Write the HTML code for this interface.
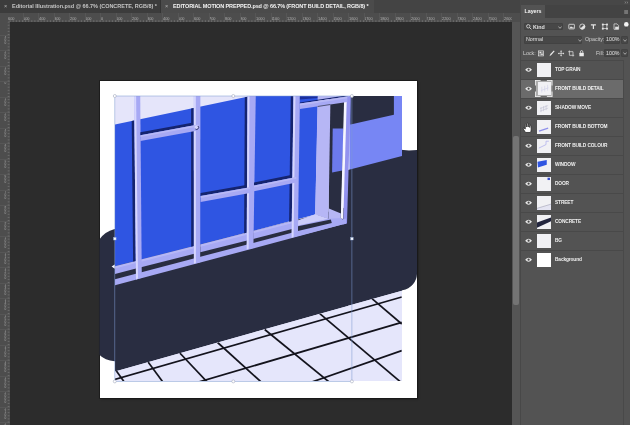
<!DOCTYPE html>
<html>
<head>
<meta charset="utf-8">
<title>Photoshop</title>
<style>
html,body{margin:0;padding:0;}
span,.tab,#ptab{will-change:transform;}
body{width:630px;height:425px;overflow:hidden;background:#2c2c2c;position:relative;font-family:"Liberation Sans",sans-serif;color:#ddd;}
.abs{position:absolute;}
#tabbar{left:0;top:0;width:512px;height:13px;background:#444;}
.tab{position:absolute;top:0;height:13px;font-size:5.5px;line-height:12.6px;white-space:nowrap;color:#c4c4c4;font-weight:bold;}
#tab1{left:0;width:161px;background:#3c3c3c;letter-spacing:-0.03px;border-right:0.5px solid #333;box-sizing:border-box;}
#tab2{left:161px;width:213px;background:#4b4b4b;color:#f4f4f4;letter-spacing:-0.115px;}
.tab .x{position:absolute;left:4.2px;top:0;font-weight:normal;font-size:5.5px;color:#b5b5b5;}
.tab .t{position:absolute;left:11.8px;top:0;}
#hruler{left:0;top:13px;width:512px;height:9px;background:#4d4d4d;overflow:hidden;}
#vruler{left:0;top:22px;width:9.5px;height:403px;background:#4d4d4d;overflow:hidden;}
.rnum{position:absolute;top:3.9px;font-size:3.9px;line-height:4px;color:#b2b2b2;}
.tk{position:absolute;top:0;width:0.5px;height:9px;background:#565656;}
.vnum{position:absolute;left:3.9px;font-size:3.2px;line-height:3px;color:#a8a8a8;text-align:center;width:3px;}
.vtk{position:absolute;left:0;width:9.5px;height:0.5px;background:#565656;}
#corner{left:0;top:13px;width:8px;height:9px;background:#4d4d4d;}
#canvas{left:9.5px;top:22px;width:502.5px;height:403px;background:#2c2c2c;}
#board{left:99.5px;top:81px;width:317.5px;height:316.5px;background:#fff;box-shadow:0 0 0 0.8px #1a1a1a, 1px 1px 2px rgba(0,0,0,.5);}
#art{left:0;top:0;width:630px;height:425px;}
#vscroll{left:512px;top:0;width:8.5px;height:425px;background:linear-gradient(to bottom,#444 0,#444 13px,#4d4d4d 13px,#4d4d4d 22px,#555 22px);}
#vthumb{left:513.2px;top:135.6px;width:5.8px;height:169.4px;background:#747474;border-radius:2px;}
#panel{left:520.2px;top:0;width:109.8px;height:425px;background:#535353;border-left:1px solid #484848;box-sizing:border-box;}
#ptop{left:521.2px;top:0;width:108.8px;height:5px;background:#474747;}
#ptabs{left:521.2px;top:5px;width:108.8px;height:12.5px;background:#434343;}
#ptab{left:521.2px;top:5px;width:24px;height:12.5px;background:#535353;font-size:5.3px;font-weight:bold;color:#f4f4f4;line-height:13.6px;text-align:center;}
.fld{position:absolute;background:#474747;border:0.5px solid #424242;box-sizing:border-box;border-radius:1px;}
.ptxt{position:absolute;font-size:5.3px;line-height:7px;color:#e2e2e2;white-space:nowrap;}
.chev{width:4px;height:3px;}
.row{position:absolute;left:521.3px;width:101.5px;height:19px;box-sizing:border-box;border-top:0.6px solid #494949;}
.row.sel{background:#6b6b6b;}
.row .eye{position:absolute;left:3.3px;top:6.9px;width:7.2px;height:5.4px;}
.row .th{position:absolute;left:15.9px;top:2.2px;width:14.2px;height:14.2px;}
.row .fr{position:absolute;left:14.1px;top:0.9px;width:17.5px;height:17px;}
.row.sel .th{left:16.3px;top:2.6px;width:13.4px;height:13.4px;}
.row .nm{position:absolute;left:34.2px;top:6.3px;font-size:4.8px;line-height:6.5px;color:#f0f0f0;white-space:nowrap;letter-spacing:-0.12px;font-weight:bold;}
</style>
</head>
<body>
<div id="tabbar" class="abs">
  <div id="tab1" class="tab"><span class="x">×</span><span class="t">Editorial Illustration.psd @ 66.7% (CONCRETE, RGB/8) *</span></div>
  <div id="tab2" class="tab"><span class="x">×</span><span class="t">EDITORIAL MOTION PREPPED.psd @ 66.7% (FRONT BUILD DETAIL, RGB/8) *</span></div>
</div>
<div id="hruler" class="abs"><span class="rnum" style="left:7.9px">600</span><i class="tk" style="left:7.0px"></i><span class="rnum" style="left:23.4px">500</span><i class="tk" style="left:22.5px"></i><span class="rnum" style="left:38.9px">400</span><i class="tk" style="left:38.0px"></i><span class="rnum" style="left:54.4px">300</span><i class="tk" style="left:53.5px"></i><span class="rnum" style="left:69.9px">200</span><i class="tk" style="left:69.0px"></i><span class="rnum" style="left:85.4px">100</span><i class="tk" style="left:84.5px"></i><span class="rnum" style="left:100.9px">0</span><i class="tk" style="left:100.0px"></i><span class="rnum" style="left:116.4px">100</span><i class="tk" style="left:115.5px"></i><span class="rnum" style="left:131.9px">200</span><i class="tk" style="left:131.0px"></i><span class="rnum" style="left:147.4px">300</span><i class="tk" style="left:146.5px"></i><span class="rnum" style="left:162.9px">400</span><i class="tk" style="left:162.0px"></i><span class="rnum" style="left:178.4px">500</span><i class="tk" style="left:177.5px"></i><span class="rnum" style="left:193.9px">600</span><i class="tk" style="left:193.0px"></i><span class="rnum" style="left:209.4px">700</span><i class="tk" style="left:208.5px"></i><span class="rnum" style="left:224.9px">800</span><i class="tk" style="left:224.0px"></i><span class="rnum" style="left:240.4px">900</span><i class="tk" style="left:239.5px"></i><span class="rnum" style="left:255.9px">1000</span><i class="tk" style="left:255.0px"></i><span class="rnum" style="left:271.4px">1100</span><i class="tk" style="left:270.5px"></i><span class="rnum" style="left:286.9px">1200</span><i class="tk" style="left:286.0px"></i><span class="rnum" style="left:302.4px">1300</span><i class="tk" style="left:301.5px"></i><span class="rnum" style="left:317.9px">1400</span><i class="tk" style="left:317.0px"></i><span class="rnum" style="left:333.4px">1500</span><i class="tk" style="left:332.5px"></i><span class="rnum" style="left:348.9px">1600</span><i class="tk" style="left:348.0px"></i><span class="rnum" style="left:364.4px">1700</span><i class="tk" style="left:363.5px"></i><span class="rnum" style="left:379.9px">1800</span><i class="tk" style="left:379.0px"></i><span class="rnum" style="left:395.4px">1900</span><i class="tk" style="left:394.5px"></i><span class="rnum" style="left:410.9px">2000</span><i class="tk" style="left:410.0px"></i><span class="rnum" style="left:426.4px">2100</span><i class="tk" style="left:425.5px"></i><span class="rnum" style="left:441.9px">2200</span><i class="tk" style="left:441.0px"></i><span class="rnum" style="left:457.4px">2300</span><i class="tk" style="left:456.5px"></i><span class="rnum" style="left:472.9px">2400</span><i class="tk" style="left:472.0px"></i><span class="rnum" style="left:488.4px">2500</span><i class="tk" style="left:487.5px"></i><span class="rnum" style="left:503.9px">2600</span><i class="tk" style="left:503.0px"></i></div>
<div id="vruler" class="abs"><span class="vnum" style="top:13.5px">3<br>0<br>0</span><i class="vtk" style="top:12.5px"></i><span class="vnum" style="top:29.0px">2<br>0<br>0</span><i class="vtk" style="top:28.0px"></i><span class="vnum" style="top:44.5px">1<br>0<br>0</span><i class="vtk" style="top:43.5px"></i><span class="vnum" style="top:60.0px">0</span><i class="vtk" style="top:59.0px"></i><span class="vnum" style="top:75.5px">1<br>0<br>0</span><i class="vtk" style="top:74.5px"></i><span class="vnum" style="top:91.0px">2<br>0<br>0</span><i class="vtk" style="top:90.0px"></i><span class="vnum" style="top:106.5px">3<br>0<br>0</span><i class="vtk" style="top:105.5px"></i><span class="vnum" style="top:122.0px">4<br>0<br>0</span><i class="vtk" style="top:121.0px"></i><span class="vnum" style="top:137.5px">5<br>0<br>0</span><i class="vtk" style="top:136.5px"></i><span class="vnum" style="top:153.0px">6<br>0<br>0</span><i class="vtk" style="top:152.0px"></i><span class="vnum" style="top:168.5px">7<br>0<br>0</span><i class="vtk" style="top:167.5px"></i><span class="vnum" style="top:184.0px">8<br>0<br>0</span><i class="vtk" style="top:183.0px"></i><span class="vnum" style="top:199.5px">9<br>0<br>0</span><i class="vtk" style="top:198.5px"></i><span class="vnum" style="top:215.0px">1<br>0<br>0<br>0</span><i class="vtk" style="top:214.0px"></i><span class="vnum" style="top:230.5px">1<br>1<br>0<br>0</span><i class="vtk" style="top:229.5px"></i><span class="vnum" style="top:246.0px">1<br>2<br>0<br>0</span><i class="vtk" style="top:245.0px"></i><span class="vnum" style="top:261.5px">1<br>3<br>0<br>0</span><i class="vtk" style="top:260.5px"></i><span class="vnum" style="top:277.0px">1<br>4<br>0<br>0</span><i class="vtk" style="top:276.0px"></i><span class="vnum" style="top:292.5px">1<br>5<br>0<br>0</span><i class="vtk" style="top:291.5px"></i><span class="vnum" style="top:308.0px">1<br>6<br>0<br>0</span><i class="vtk" style="top:307.0px"></i><span class="vnum" style="top:323.5px">1<br>7<br>0<br>0</span><i class="vtk" style="top:322.5px"></i><span class="vnum" style="top:339.0px">1<br>8<br>0<br>0</span><i class="vtk" style="top:338.0px"></i><span class="vnum" style="top:354.5px">1<br>9<br>0<br>0</span><i class="vtk" style="top:353.5px"></i><span class="vnum" style="top:370.0px">2<br>0<br>0<br>0</span><i class="vtk" style="top:369.0px"></i><span class="vnum" style="top:385.5px">2<br>1<br>0<br>0</span><i class="vtk" style="top:384.5px"></i><span class="vnum" style="top:401.0px">2<br>2<br>0<br>0</span><i class="vtk" style="top:400.0px"></i></div>
<svg class="abs" style="left:0;top:0;width:512px;height:425px" viewBox="0 0 512 425"><path d="M10.10 20.2V22M13.20 20.2V22M16.30 20.2V22M19.40 20.2V22M22.50 20.2V22M25.60 20.2V22M28.70 20.2V22M31.80 20.2V22M34.90 20.2V22M38.00 20.2V22M41.10 20.2V22M44.20 20.2V22M47.30 20.2V22M50.40 20.2V22M53.50 20.2V22M56.60 20.2V22M59.70 20.2V22M62.80 20.2V22M65.90 20.2V22M69.00 20.2V22M72.10 20.2V22M75.20 20.2V22M78.30 20.2V22M81.40 20.2V22M84.50 20.2V22M87.60 20.2V22M90.70 20.2V22M93.80 20.2V22M96.90 20.2V22M100.00 20.2V22M103.10 20.2V22M106.20 20.2V22M109.30 20.2V22M112.40 20.2V22M115.50 20.2V22M118.60 20.2V22M121.70 20.2V22M124.80 20.2V22M127.90 20.2V22M131.00 20.2V22M134.10 20.2V22M137.20 20.2V22M140.30 20.2V22M143.40 20.2V22M146.50 20.2V22M149.60 20.2V22M152.70 20.2V22M155.80 20.2V22M158.90 20.2V22M162.00 20.2V22M165.10 20.2V22M168.20 20.2V22M171.30 20.2V22M174.40 20.2V22M177.50 20.2V22M180.60 20.2V22M183.70 20.2V22M186.80 20.2V22M189.90 20.2V22M193.00 20.2V22M196.10 20.2V22M199.20 20.2V22M202.30 20.2V22M205.40 20.2V22M208.50 20.2V22M211.60 20.2V22M214.70 20.2V22M217.80 20.2V22M220.90 20.2V22M224.00 20.2V22M227.10 20.2V22M230.20 20.2V22M233.30 20.2V22M236.40 20.2V22M239.50 20.2V22M242.60 20.2V22M245.70 20.2V22M248.80 20.2V22M251.90 20.2V22M255.00 20.2V22M258.10 20.2V22M261.20 20.2V22M264.30 20.2V22M267.40 20.2V22M270.50 20.2V22M273.60 20.2V22M276.70 20.2V22M279.80 20.2V22M282.90 20.2V22M286.00 20.2V22M289.10 20.2V22M292.20 20.2V22M295.30 20.2V22M298.40 20.2V22M301.50 20.2V22M304.60 20.2V22M307.70 20.2V22M310.80 20.2V22M313.90 20.2V22M317.00 20.2V22M320.10 20.2V22M323.20 20.2V22M326.30 20.2V22M329.40 20.2V22M332.50 20.2V22M335.60 20.2V22M338.70 20.2V22M341.80 20.2V22M344.90 20.2V22M348.00 20.2V22M351.10 20.2V22M354.20 20.2V22M357.30 20.2V22M360.40 20.2V22M363.50 20.2V22M366.60 20.2V22M369.70 20.2V22M372.80 20.2V22M375.90 20.2V22M379.00 20.2V22M382.10 20.2V22M385.20 20.2V22M388.30 20.2V22M391.40 20.2V22M394.50 20.2V22M397.60 20.2V22M400.70 20.2V22M403.80 20.2V22M406.90 20.2V22M410.00 20.2V22M413.10 20.2V22M416.20 20.2V22M419.30 20.2V22M422.40 20.2V22M425.50 20.2V22M428.60 20.2V22M431.70 20.2V22M434.80 20.2V22M437.90 20.2V22M441.00 20.2V22M444.10 20.2V22M447.20 20.2V22M450.30 20.2V22M453.40 20.2V22M456.50 20.2V22M459.60 20.2V22M462.70 20.2V22M465.80 20.2V22M468.90 20.2V22M472.00 20.2V22M475.10 20.2V22M478.20 20.2V22M481.30 20.2V22M484.40 20.2V22M487.50 20.2V22M490.60 20.2V22M493.70 20.2V22M496.80 20.2V22M499.90 20.2V22M503.00 20.2V22M506.10 20.2V22M509.20 20.2V22M7.7 22.10H9.5M7.7 25.20H9.5M7.7 28.30H9.5M7.7 31.40H9.5M7.7 34.50H9.5M7.7 37.60H9.5M7.7 40.70H9.5M7.7 43.80H9.5M7.7 46.90H9.5M7.7 50.00H9.5M7.7 53.10H9.5M7.7 56.20H9.5M7.7 59.30H9.5M7.7 62.40H9.5M7.7 65.50H9.5M7.7 68.60H9.5M7.7 71.70H9.5M7.7 74.80H9.5M7.7 77.90H9.5M7.7 81.00H9.5M7.7 84.10H9.5M7.7 87.20H9.5M7.7 90.30H9.5M7.7 93.40H9.5M7.7 96.50H9.5M7.7 99.60H9.5M7.7 102.70H9.5M7.7 105.80H9.5M7.7 108.90H9.5M7.7 112.00H9.5M7.7 115.10H9.5M7.7 118.20H9.5M7.7 121.30H9.5M7.7 124.40H9.5M7.7 127.50H9.5M7.7 130.60H9.5M7.7 133.70H9.5M7.7 136.80H9.5M7.7 139.90H9.5M7.7 143.00H9.5M7.7 146.10H9.5M7.7 149.20H9.5M7.7 152.30H9.5M7.7 155.40H9.5M7.7 158.50H9.5M7.7 161.60H9.5M7.7 164.70H9.5M7.7 167.80H9.5M7.7 170.90H9.5M7.7 174.00H9.5M7.7 177.10H9.5M7.7 180.20H9.5M7.7 183.30H9.5M7.7 186.40H9.5M7.7 189.50H9.5M7.7 192.60H9.5M7.7 195.70H9.5M7.7 198.80H9.5M7.7 201.90H9.5M7.7 205.00H9.5M7.7 208.10H9.5M7.7 211.20H9.5M7.7 214.30H9.5M7.7 217.40H9.5M7.7 220.50H9.5M7.7 223.60H9.5M7.7 226.70H9.5M7.7 229.80H9.5M7.7 232.90H9.5M7.7 236.00H9.5M7.7 239.10H9.5M7.7 242.20H9.5M7.7 245.30H9.5M7.7 248.40H9.5M7.7 251.50H9.5M7.7 254.60H9.5M7.7 257.70H9.5M7.7 260.80H9.5M7.7 263.90H9.5M7.7 267.00H9.5M7.7 270.10H9.5M7.7 273.20H9.5M7.7 276.30H9.5M7.7 279.40H9.5M7.7 282.50H9.5M7.7 285.60H9.5M7.7 288.70H9.5M7.7 291.80H9.5M7.7 294.90H9.5M7.7 298.00H9.5M7.7 301.10H9.5M7.7 304.20H9.5M7.7 307.30H9.5M7.7 310.40H9.5M7.7 313.50H9.5M7.7 316.60H9.5M7.7 319.70H9.5M7.7 322.80H9.5M7.7 325.90H9.5M7.7 329.00H9.5M7.7 332.10H9.5M7.7 335.20H9.5M7.7 338.30H9.5M7.7 341.40H9.5M7.7 344.50H9.5M7.7 347.60H9.5M7.7 350.70H9.5M7.7 353.80H9.5M7.7 356.90H9.5M7.7 360.00H9.5M7.7 363.10H9.5M7.7 366.20H9.5M7.7 369.30H9.5M7.7 372.40H9.5M7.7 375.50H9.5M7.7 378.60H9.5M7.7 381.70H9.5M7.7 384.80H9.5M7.7 387.90H9.5M7.7 391.00H9.5M7.7 394.10H9.5M7.7 397.20H9.5M7.7 400.30H9.5M7.7 403.40H9.5M7.7 406.50H9.5M7.7 409.60H9.5M7.7 412.70H9.5M7.7 415.80H9.5M7.7 418.90H9.5M7.7 422.00H9.5" stroke="#828282" stroke-width="0.6" fill="none"/></svg>
<div id="corner" class="abs"></div>
<div id="canvas" class="abs"></div>
<div id="board" class="abs"></div>
<svg id="art" class="abs" viewBox="0 0 630 425">
<defs><clipPath id="floorclip"><polygon points="114.8,371.6 401.8,290.7 401.8,381.2 114.8,381.2"/></clipPath>
<clipPath id="artclip"><rect x="115" y="96" width="287" height="285"/></clipPath>
<clipPath id="imgclip"><rect x="99.5" y="81" width="317.5" height="316.5"/></clipPath></defs>
<g clip-path="url(#imgclip)">
<path d="M116 229 L114.7 229 Q104.5 231.5 99 240 L99 354.6 Q105 360.6 114.7 361.2 L116 361.2 Z" fill="#292d41"/>
<path d="M401 149.7 L409 150.6 L418 149.8 L418 272.8 L417 272.8 A17 17 0 0 1 402.4 290.2 L401 290.5 Z" fill="#292d41"/>
<g clip-path="url(#artclip)">
<polygon points="111.8,93.2 404.8,93.2 404.8,384.2 111.8,384.2" fill="#e5e5fa"/>
<polygon points="111.8,125.2 264.2,93.2 318.0,93.2 315.2,214.6 111.8,268.1" fill="#2f55e2"/>
<polygon points="111.8,267.1 348.0,206.8 348.0,305.9 111.8,372.4" fill="#292d41"/>
<polygon points="349.5,93.2 404.8,93.2 404.8,165.0 349.5,175.0" fill="#7786f4"/>
<polygon points="350.5,93.2 393.9,93.2 393.9,114.8 350.5,124.4" fill="#292d41"/>
<polygon points="347.0,170.2 404.8,155.3 404.8,289.9 347.0,306.1" fill="#292d41"/>
<polygon points="111.8,372.4 404.8,289.9 404.8,384.2 111.8,384.2" fill="#e5e6fb"/>
<polygon points="329.0,99.0 345.0,97.0 341.0,216.0 328.6,212.0" fill="#292d41"/>
<polygon points="332.7,128.5 343.6,128.5 342.3,170.6 332.1,172.4" fill="#6c7aec"/>
<polygon points="317.5,104.0 330.4,102.0 328.5,219.0 315.2,214.5" fill="#b6b6f5"/>
<polygon points="328.9,208.4 340.9,213.6 340.7,219.0 328.6,219.5" fill="#b6b6f5"/>
<polygon points="344.2,96.2 346.9,96.2 343.2,219.0 340.8,218.4" fill="#f6f6ff"/>
<polygon points="346.9,96.2 350.7,96.2 347.0,223.4 343.2,224.5" fill="#9393ef"/>
<polygon points="111.8,280.0 346.0,218.5 346.0,223.6 111.8,286.2" fill="#a7a9f4"/>
<polygon points="111.8,267.1 136.0,260.9 136.0,268.5 111.8,274.7" fill="#a7a9f4"/>
<polygon points="111.8,267.1 136.0,260.9 136.0,263.1 111.8,269.3" fill="#c3c3f7" opacity="0.55"/>
<polygon points="141.0,259.6 194.2,246.0 194.2,253.8 141.0,267.3" fill="#a7a9f4"/>
<polygon points="141.0,259.6 194.2,246.0 194.2,248.2 141.0,261.8" fill="#c3c3f7" opacity="0.55"/>
<polygon points="200.3,244.5 247.2,232.5 247.2,240.4 200.3,252.3" fill="#a7a9f4"/>
<polygon points="200.3,244.5 247.2,232.5 247.2,234.7 200.3,246.7" fill="#c3c3f7" opacity="0.55"/>
<polygon points="253.3,231.0 292.0,221.1 292.0,229.1 253.3,238.9" fill="#a7a9f4"/>
<polygon points="253.3,231.0 292.0,221.1 292.0,223.3 253.3,233.2" fill="#c3c3f7" opacity="0.55"/>
<polygon points="297.9,220.4 315.2,214.4 328.6,218.8 341.0,218.0 346.0,223.6 297.9,236.0" fill="#a7a9f4"/>
<polygon points="297.9,220.4 315.2,214.2 328.4,218.7 297.9,225.6" fill="#cdcdfa"/>
<polygon points="297.9,226.2 330.8,219.6 331.8,223.0 297.9,231.0" fill="#292d41"/>
<polygon points="131.7,121.1 134.4,120.5 135.8,260.9 133.1,261.5" fill="#15246f"/>
<polygon points="134.1,93.2 140.2,93.2 141.8,277.8 136.0,279.4" fill="#a7a9f4"/>
<polygon points="134.1,93.2 136.1,93.2 138.0,278.6 136.0,279.4" fill="#dedeff" opacity="0.85"/>
<polygon points="191.1,108.6 193.8,108.0 193.9,246.1 191.2,246.7" fill="#15246f"/>
<polygon points="193.8,93.2 200.4,93.2 200.2,262.2 193.9,263.8" fill="#a7a9f4"/>
<polygon points="193.8,93.2 195.8,93.2 195.9,263.0 193.9,263.8" fill="#dedeff" opacity="0.85"/>
<polygon points="244.8,97.3 247.5,96.7 246.8,232.7 244.1,233.3" fill="#15246f"/>
<polygon points="247.5,93.2 255.8,93.2 253.4,248.0 246.7,249.6" fill="#a7a9f4"/>
<polygon points="247.5,93.2 249.5,93.2 248.7,248.8 246.7,249.6" fill="#dedeff" opacity="0.85"/>
<polygon points="290.8,93.8 293.5,93.2 291.8,221.2 289.1,221.8" fill="#15246f"/>
<polygon points="293.5,93.2 300.0,93.2 297.9,236.1 291.6,237.7" fill="#a7a9f4"/>
<polygon points="293.5,93.2 295.5,93.2 293.6,236.9 291.6,237.7" fill="#dedeff" opacity="0.85"/>
<polygon points="140.4,132.2 192.0,122.7 192.0,125.7 140.4,135.2" fill="#15246f"/>
<polygon points="140.4,135.2 198.1,124.6 198.1,130.5 140.4,141.1" fill="#a7a9f4"/>
<polygon points="140.4,135.2 198.1,124.6 198.1,126.4 140.4,137.0" fill="#c3c3f7" opacity="0.6"/>
<polygon points="200.6,193.1 246.0,185.0 246.0,188.0 200.6,196.1" fill="#15246f"/>
<polygon points="200.6,196.1 250.0,187.3 250.0,192.9 200.6,202.0" fill="#a7a9f4"/>
<polygon points="200.6,196.1 250.0,187.3 250.0,189.1 200.6,197.9" fill="#c3c3f7" opacity="0.6"/>
<polygon points="254.0,182.6 291.0,175.0 291.0,178.0 254.0,185.6" fill="#15246f"/>
<polygon points="254.0,185.6 296.3,176.9 296.3,182.5 254.0,191.2" fill="#a7a9f4"/>
<polygon points="254.0,185.6 296.3,176.9 296.3,178.7 254.0,187.4" fill="#c3c3f7" opacity="0.6"/>
<polygon points="299.9,96.2 318.0,96.2 318.0,100.0 299.9,103.6" fill="#2f55e2"/>
<polygon points="299.9,96.2 318.0,96.2 318.0,98.0 299.9,99.6" fill="#1b2f9c"/>
<polygon points="317.6,96.2 347.0,96.2 347.0,96.5 317.6,100.0" fill="#b6b6f5"/>
<polygon points="299.9,102.4 347.3,95.2 347.3,96.4 299.9,103.6" fill="#15246f"/>
<polygon points="299.9,103.6 347.3,96.4 347.3,102.0 299.9,109.0" fill="#a7a9f4"/>
<polygon points="299.9,103.6 347.3,96.4 347.3,98.2 299.9,105.4" fill="#c3c3f7" opacity="0.6"/>
<polygon points="317.6,105.9 330.4,104.0 330.4,105.0 317.6,106.9" fill="#292d41" opacity="0.7"/>
<g clip-path="url(#floorclip)">
<line x1="114.8" y1="379.5" x2="401.8" y2="297.0" stroke="#13131c" stroke-width="1.7"/>
<line x1="198.0" y1="382.2" x2="401.8" y2="322.3" stroke="#13131c" stroke-width="1.7"/>
<line x1="309.0" y1="383.0" x2="401.8" y2="350.6" stroke="#13131c" stroke-width="1.7"/>
<line x1="115.9" y1="370.2" x2="124.4" y2="382.2" stroke="#13131c" stroke-width="1.7"/>
<line x1="148.1" y1="362.0" x2="163.0" y2="382.2" stroke="#13131c" stroke-width="1.7"/>
<line x1="179.8" y1="353.0" x2="207.4" y2="382.2" stroke="#13131c" stroke-width="1.7"/>
<line x1="217.6" y1="342.5" x2="261.4" y2="382.2" stroke="#13131c" stroke-width="1.7"/>
<line x1="264.7" y1="329.5" x2="329.4" y2="382.2" stroke="#13131c" stroke-width="1.7"/>
<line x1="319.8" y1="313.6" x2="401.8" y2="383.0" stroke="#13131c" stroke-width="1.7"/>
<line x1="372.0" y1="298.6" x2="401.8" y2="324.0" stroke="#13131c" stroke-width="1.7"/>
</g>
</g>
</g>
<rect x="114.8" y="96.0" width="237.09999999999997" height="285.4" fill="none" stroke="#7d9bd2" stroke-width="0.7" opacity="0.75"/>
<circle cx="114.8" cy="96.0" r="1.5" fill="#ffffff" stroke="#a3a9bd" stroke-width="0.6"/>
<rect x="113.5" y="237.4" width="2.6" height="2.6" fill="#f4f8ff" stroke="#8fa6d0" stroke-width="0.4"/>
<circle cx="114.8" cy="381.4" r="1.5" fill="#ffffff" stroke="#a3a9bd" stroke-width="0.6"/>
<circle cx="233.3" cy="96.0" r="1.5" fill="#ffffff" stroke="#a3a9bd" stroke-width="0.6"/>
<circle cx="233.3" cy="381.4" r="1.5" fill="#ffffff" stroke="#a3a9bd" stroke-width="0.6"/>
<circle cx="351.9" cy="96.0" r="1.5" fill="#ffffff" stroke="#a3a9bd" stroke-width="0.6"/>
<rect x="350.6" y="237.4" width="2.6" height="2.6" fill="#f4f8ff" stroke="#8fa6d0" stroke-width="0.4"/>
<circle cx="351.9" cy="381.4" r="1.5" fill="#ffffff" stroke="#a3a9bd" stroke-width="0.6"/>
<circle cx="196.5" cy="127.3" r="1.9" fill="#d3d3fb"/><path d="M197.9 126 A1.9 1.9 0 0 1 195.4 129" fill="none" stroke="#262a5e" stroke-width="0.9"/>
<polygon points="111.6,266.6 114.7,264.6 114.7,268.8" fill="#f4f6ff"/>
</svg>
<div id="vscroll" class="abs"></div>
<div id="vthumb" class="abs"></div>
<div id="panel" class="abs"></div>
<div id="ptop" class="abs"></div>
<div id="ptabs" class="abs"></div>
<div id="ptab" class="abs">Layers</div>

<div class="fld" style="left:523.8px;top:22.9px;width:39.4px;height:7.6px;"></div>
<svg class="abs" style="left:525.6px;top:24.4px;width:6px;height:6px" viewBox="0 0 6 6"><circle cx="2.3" cy="2.3" r="1.7" fill="none" stroke="#e0e0e0" stroke-width="0.8"/><path d="M3.6 3.6 L5.4 5.4" stroke="#e0e0e0" stroke-width="0.9"/></svg>
<span class="ptxt" style="left:532.8px;top:23.7px;font-weight:bold;">Kind</span>
<svg class="abs chev" style="left:558.3px;top:26px" viewBox="0 0 4 3"><path d="M0.4 0.5 L2 2.3 L3.6 0.5" fill="none" stroke="#d0d0d0" stroke-width="0.7"/></svg>
<svg class="abs" style="left:568px;top:21.3px;width:62px;height:10px" viewBox="568 21.3 62 10">
 <rect x="568.8" y="24.6" width="5.6" height="4.6" rx="0.5" fill="none" stroke="#e4e4e4" stroke-width="0.8"/><path d="M569.4 28.6 L571 26.6 L572.3 27.8 L573 27.2 L574 28.6Z" fill="#e4e4e4"/>
 <circle cx="582.3" cy="26.9" r="2.6" fill="none" stroke="#e4e4e4" stroke-width="0.8"/><path d="M580.3 28.7 A2.6 2.6 0 0 0 584.3 25.1 Z" fill="#e4e4e4"/>
 <path d="M590.9 24.6 H595.9 V25.8 H594 V29.4 H592.8 V25.8 H590.9Z" fill="#e4e4e4"/>
 <rect x="602.9" y="24.9" width="4" height="4" fill="none" stroke="#e4e4e4" stroke-width="0.7"/><rect x="601.9" y="23.9" width="1.8" height="1.8" fill="#e4e4e4"/><rect x="606.1" y="23.9" width="1.8" height="1.8" fill="#e4e4e4"/><rect x="601.9" y="28.1" width="1.8" height="1.8" fill="#e4e4e4"/><rect x="606.1" y="28.1" width="1.8" height="1.8" fill="#e4e4e4"/>
 <path d="M614 24.2 H617 L618.6 25.8 V29.6 H614Z" fill="none" stroke="#e4e4e4" stroke-width="0.7"/><rect x="615.2" y="27" width="3.4" height="2.6" fill="#e4e4e4"/>
 <circle cx="626.3" cy="24.7" r="2.3" fill="#f4f4f4"/><path d="M626.3 27 V29.6" stroke="#484848" stroke-width="1.3"/>
</svg>
<div class="fld" style="left:523.8px;top:35.8px;width:58.6px;height:7.8px;"></div>
<span class="ptxt" style="left:525.8px;top:36.3px;">Normal</span>
<svg class="abs chev" style="left:577.8px;top:38.6px" viewBox="0 0 4 3"><path d="M0.4 0.5 L2 2.3 L3.6 0.5" fill="none" stroke="#d0d0d0" stroke-width="0.7"/></svg>
<span class="ptxt" style="left:585.2px;top:36.3px;color:#cfcfcf;">Opacity:</span>
<div class="fld" style="left:604.4px;top:35.8px;width:15.4px;height:7.8px;"></div>
<span class="ptxt" style="left:605.6px;top:36.3px;">100%</span>
<div class="fld" style="left:621.3px;top:35.8px;width:7px;height:7.8px;"></div>
<svg class="abs chev" style="left:622.8px;top:38.6px" viewBox="0 0 4 3"><path d="M0.4 0.5 L2 2.3 L3.6 0.5" fill="none" stroke="#d0d0d0" stroke-width="0.7"/></svg>
<span class="ptxt" style="left:523px;top:50.1px;color:#cfcfcf;">Lock:</span>
<svg class="abs" style="left:537px;top:48.5px;width:50px;height:9px" viewBox="537 48.5 50 9">
 <rect x="538.6" y="50.4" width="5" height="5" fill="none" stroke="#e4e4e4" stroke-width="0.7"/><rect x="539.4" y="51.2" width="1.7" height="1.7" fill="#e4e4e4"/><rect x="541.1" y="52.9" width="1.7" height="1.7" fill="#e4e4e4"/><rect x="541.1" y="51.2" width="1.7" height="1.7" fill="#9a9a9a"/><rect x="539.4" y="52.9" width="1.7" height="1.7" fill="#9a9a9a"/>
 <path d="M549.5 55.8 L550.4 53.6 L553.8 50 L554.6 50.8 L551.3 54.6 Z" fill="#ececec"/>
 <path d="M561.1 50.4 V55.4 M558.6 52.9 H563.6" stroke="#e4e4e4" stroke-width="0.7"/><path d="M561.1 49.7 L562.1 51 H560.1Z M561.1 56.1 L562.1 54.8 H560.1Z M557.9 52.9 L559.2 51.9 V53.9Z M564.3 52.9 L563 51.9 V53.9Z" fill="#e4e4e4"/>
 <path d="M569.4 50 V54.8 H574.2 M568.2 51.2 H573 V56" fill="none" stroke="#e4e4e4" stroke-width="0.7"/>
 <rect x="579.4" y="52.3" width="4.4" height="3.5" rx="0.4" fill="#ececec"/><path d="M580.4 52.3 V51.3 A1.2 1.2 0 0 1 582.8 51.3 V52.3" fill="none" stroke="#ececec" stroke-width="0.8"/>
</svg>
<span class="ptxt" style="left:596.2px;top:50.1px;color:#cfcfcf;">Fill:</span>
<div class="fld" style="left:604.4px;top:49.4px;width:15.4px;height:7.8px;"></div>
<span class="ptxt" style="left:605.6px;top:50.1px;">100%</span>
<div class="fld" style="left:621.3px;top:49.4px;width:7px;height:7.8px;"></div>
<svg class="abs chev" style="left:622.8px;top:52.3px" viewBox="0 0 4 3"><path d="M0.4 0.5 L2 2.3 L3.6 0.5" fill="none" stroke="#d0d0d0" stroke-width="0.7"/></svg>
<svg class="abs" style="left:623.6px;top:0.9px;width:5px;height:3px" viewBox="0 0 7 4"><path d="M1 0.6 L2.6 2 L1 3.4 M3.8 0.6 L5.4 2 L3.8 3.4" fill="none" stroke="#a8a8a8" stroke-width="0.8"/></svg>
<svg class="abs" style="left:623.6px;top:9.8px;width:4.6px;height:4px" viewBox="0 0 6 5"><path d="M0.3 0.6 H5.7 M0.3 1.9 H5.7 M0.3 3.2 H5.7 M0.3 4.5 H5.7" stroke="#a4a4a4" stroke-width="0.7"/></svg>
<div class="abs" style="left:622.6px;top:59.6px;width:0.7px;height:365.4px;background:#494949;"></div>

<div class="row" style="top:59.50px"><svg class="eye" viewBox="0 0 8 6"><path d="M0.2 3 Q4 -1.3 7.8 3 Q4 7.3 0.2 3Z" fill="#ececec"/><circle cx="4" cy="3" r="1.25" fill="#484848"/></svg><svg class="th" viewBox="0 0 14 14"><rect width="14" height="14" fill="#f1f1f4"/></svg><span class="nm">TOP GRAIN</span></div>
<div class="row sel" style="top:78.50px"><svg class="eye" viewBox="0 0 8 6"><path d="M0.2 3 Q4 -1.3 7.8 3 Q4 7.3 0.2 3Z" fill="#ececec"/><circle cx="4" cy="3" r="1.25" fill="#484848"/></svg><svg class="fr" viewBox="0 0 17.5 17"><rect x="0.4" y="0.4" width="16.7" height="16.2" fill="#adadad" stroke="#f4f4f4" stroke-width="0.8"/><path d="M5.6 0.4H11.9M5.6 16.6H11.9M0.4 5.5V11.5M17.1 5.5V11.5" stroke="#505050" stroke-width="0.9"/></svg><svg class="th" viewBox="0 0 14 14"><rect width="14" height="14" fill="#f1f1f4"/><path d="M3 9 L11 6 M4 5v6 M7 4v6 M10 3v6" stroke="#c9c9e6" stroke-width="0.5" fill="none"/></svg><span class="nm">FRONT BUILD DETAIL</span></div>
<div class="row" style="top:97.50px"><svg class="eye" viewBox="0 0 8 6"><path d="M0.2 3 Q4 -1.3 7.8 3 Q4 7.3 0.2 3Z" fill="#ececec"/><circle cx="4" cy="3" r="1.25" fill="#484848"/></svg><svg class="th" viewBox="0 0 14 14"><rect width="14" height="14" fill="#f1f1f4"/><path d="M3 10 L11 7 M4 6v5 M6.5 5v5 M9 4v5 M3 7.5 L11 4.5" stroke="#b9b9cf" stroke-width="0.5" fill="none"/></svg><span class="nm">SHADOW MOVE</span></div>
<div class="row" style="top:116.50px"><svg class="th" viewBox="0 0 14 14"><rect width="14" height="14" fill="#f1f1f4"/><path d="M2 11 L11 8" stroke="#8f90ea" stroke-width="1.3" fill="none"/></svg><span class="nm">FRONT BUILD BOTTOM</span></div>
<div class="row" style="top:135.50px"><svg class="eye" viewBox="0 0 8 6"><path d="M0.2 3 Q4 -1.3 7.8 3 Q4 7.3 0.2 3Z" fill="#ececec"/><circle cx="4" cy="3" r="1.25" fill="#484848"/></svg><svg class="th" viewBox="0 0 14 14"><rect width="14" height="14" fill="#f1f1f4"/><path d="M1.8 9 L8.9 5.5 V2.2 H11.7" stroke="#b4b4ee" stroke-width="0.8" fill="none"/></svg><span class="nm">FRONT BUILD COLOUR</span></div>
<div class="row" style="top:154.50px"><svg class="eye" viewBox="0 0 8 6"><path d="M0.2 3 Q4 -1.3 7.8 3 Q4 7.3 0.2 3Z" fill="#ececec"/><circle cx="4" cy="3" r="1.25" fill="#484848"/></svg><svg class="th" viewBox="0 0 14 14"><rect width="14" height="14" fill="#f1f1f4"/><polygon points="0.5,3.8 9.6,2 9.6,6.6 0.9,9.4" fill="#2f55e2"/></svg><span class="nm">WINDOW</span></div>
<div class="row" style="top:173.50px"><svg class="eye" viewBox="0 0 8 6"><path d="M0.2 3 Q4 -1.3 7.8 3 Q4 7.3 0.2 3Z" fill="#ececec"/><circle cx="4" cy="3" r="1.25" fill="#484848"/></svg><svg class="th" viewBox="0 0 14 14"><rect width="14" height="14" fill="#f1f1f4"/><rect x="10.4" y="0.7" width="2.4" height="2.3" fill="#3a4fd0"/></svg><span class="nm">DOOR</span></div>
<div class="row" style="top:192.50px"><svg class="eye" viewBox="0 0 8 6"><path d="M0.2 3 Q4 -1.3 7.8 3 Q4 7.3 0.2 3Z" fill="#ececec"/><circle cx="4" cy="3" r="1.25" fill="#484848"/></svg><svg class="th" viewBox="0 0 14 14"><rect width="14" height="14" fill="#f1f1f4"/><polygon points="0,12.2 14,8 14,14 0,14" fill="#e4e4f2"/><path d="M0 12.2 L14 8" stroke="#a2a2b4" stroke-width="0.6" fill="none"/></svg><span class="nm">STREET</span></div>
<div class="row" style="top:211.50px"><svg class="eye" viewBox="0 0 8 6"><path d="M0.2 3 Q4 -1.3 7.8 3 Q4 7.3 0.2 3Z" fill="#ececec"/><circle cx="4" cy="3" r="1.25" fill="#484848"/></svg><svg class="th" viewBox="0 0 14 14"><rect width="14" height="14" fill="#f1f1f4"/><polygon points="0,7.5 14,2.3 14,6.1 0,12.7" fill="#23263e"/></svg><span class="nm">CONCRETE</span></div>
<div class="row" style="top:230.50px"><svg class="eye" viewBox="0 0 8 6"><path d="M0.2 3 Q4 -1.3 7.8 3 Q4 7.3 0.2 3Z" fill="#ececec"/><circle cx="4" cy="3" r="1.25" fill="#484848"/></svg><svg class="th" viewBox="0 0 14 14"><rect width="14" height="14" fill="#f1f1f4"/></svg><span class="nm">BG</span></div>
<div class="row" style="top:249.50px"><svg class="eye" viewBox="0 0 8 6"><path d="M0.2 3 Q4 -1.3 7.8 3 Q4 7.3 0.2 3Z" fill="#ececec"/><circle cx="4" cy="3" r="1.25" fill="#484848"/></svg><svg class="th" viewBox="0 0 14 14"><rect width="14" height="14" fill="#fff"/></svg><span class="nm">Background</span></div>

<svg class="abs" style="left:521.9px;top:122.4px;width:12px;height:12px" viewBox="0 0 11 11"><path d="M3.2 9.6 L1.2 6.4 Q0.8 5.4 1.8 5.4 L3 6.4 V2.2 Q3.6 1.2 4.3 2.2 V4.6 V1.6 Q5 0.6 5.7 1.6 V4.6 V2.2 Q6.4 1.3 7.1 2.3 V5 V3.4 Q7.8 2.6 8.4 3.6 V7.4 Q8.3 8.8 7.6 9.6 Z" fill="#fff" stroke="#222" stroke-width="0.7" stroke-linejoin="round"/></svg>

</body>
</html>
